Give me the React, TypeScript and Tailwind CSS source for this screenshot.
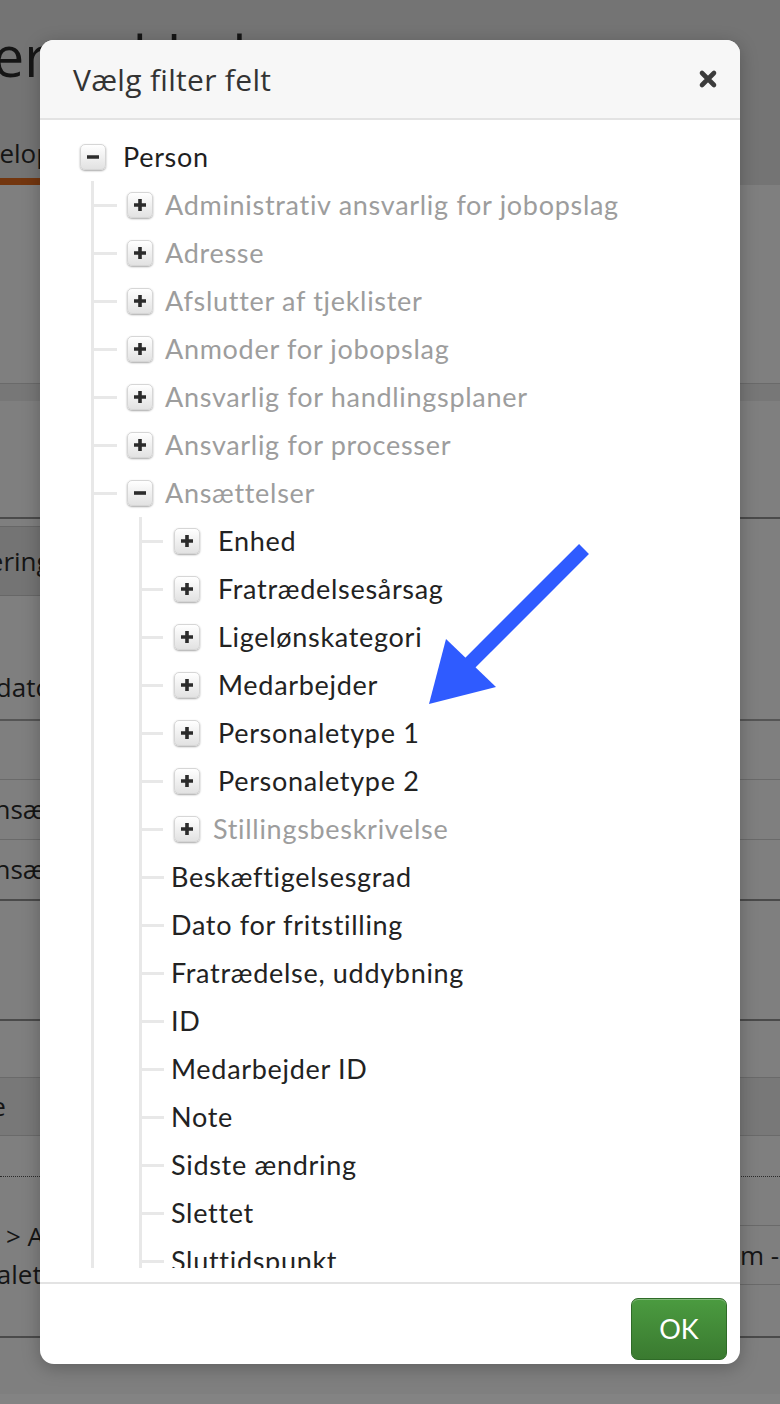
import React from 'react';

type Item = { label: string; kind: 'open' | 'closed' | 'leaf'; muted?: boolean; tight?: boolean };

const level1: Item[] = [
  { label: 'Administrativ ansvarlig for jobopslag', kind: 'closed', muted: true },
  { label: 'Adresse', kind: 'closed', muted: true },
  { label: 'Afslutter af tjeklister', kind: 'closed', muted: true },
  { label: 'Anmoder for jobopslag', kind: 'closed', muted: true },
  { label: 'Ansvarlig for handlingsplaner', kind: 'closed', muted: true },
  { label: 'Ansvarlig for processer', kind: 'closed', muted: true },
];

const employment: Item[] = [
  { label: 'Enhed', kind: 'closed' },
  { label: 'Fratrædelsesårsag', kind: 'closed' },
  { label: 'Ligelønskategori', kind: 'closed' },
  { label: 'Medarbejder', kind: 'closed' },
  { label: 'Personaletype 1', kind: 'closed' },
  { label: 'Personaletype 2', kind: 'closed' },
  { label: 'Stillingsbeskrivelse', kind: 'closed', muted: true, tight: true },
  { label: 'Beskæftigelsesgrad', kind: 'leaf' },
  { label: 'Dato for fritstilling', kind: 'leaf' },
  { label: 'Fratrædelse, uddybning', kind: 'leaf' },
  { label: 'ID', kind: 'leaf' },
  { label: 'Medarbejder ID', kind: 'leaf' },
  { label: 'Note', kind: 'leaf' },
  { label: 'Sidste ændring', kind: 'leaf' },
  { label: 'Slettet', kind: 'leaf' },
  { label: 'Sluttidspunkt', kind: 'leaf' },
  { label: 'Starttidspunkt', kind: 'leaf' },
];

const treeFont = { fontFamily: 'Lato, "Noto Sans", sans-serif' };

function ToggleBox({ open }: { open: boolean }) {
  return (
    <span className="flex h-[26px] w-[26px] shrink-0 items-center justify-center rounded-[5px] border border-[#d6d6d6] bg-linear-to-b from-white to-[#e2e2e2] shadow-[0_1px_2px_rgba(0,0,0,0.35)]">
      <svg width="14" height="14" viewBox="0 0 14 14">
        <path d={open ? 'M1 7h12' : 'M1 7h12M7 1v12'} stroke="#2b2b2b" strokeWidth="3.6" />
      </svg>
    </span>
  );
}

function Level2Row({ item }: { item: Item }) {
  const color = item.muted ? 'text-[#9d9d9d]' : 'text-[#222]';
  if (item.kind === 'leaf') {
    return (
      <li className="flex h-[48px] items-center">
        <span className="h-[3px] w-[22px] bg-[#e8e8e8]" />
        <span className={`ml-[7px] ${color}`}>{item.label}</span>
      </li>
    );
  }
  return (
    <li className="flex h-[48px] items-center">
      <span className="h-[3px] w-[21px] bg-[#e8e8e8]" />
      <span className="ml-[11px]">
        <ToggleBox open={false} />
      </span>
      <span className={`${item.tight ? 'ml-[13px]' : 'ml-[18px]'} ${color}`}>{item.label}</span>
    </li>
  );
}

function Level1Row({ item }: { item: Item }) {
  return (
    <div className="flex h-[48px] items-center">
      <span className="h-[3px] w-[23px] bg-[#e8e8e8]" />
      <span className="ml-[10px]">
        <ToggleBox open={item.kind === 'open'} />
      </span>
      <span className={`ml-[12px] ${item.muted ? 'text-[#9d9d9d]' : 'text-[#222]'}`}>{item.label}</span>
    </div>
  );
}

function BackgroundPage() {
  return (
    <div className="flex h-full flex-col text-[#151515]" style={{ fontFamily: '"Open Sans", sans-serif' }}>
      <div className="h-[185px] overflow-hidden bg-[#747474]">
        <div className="-ml-[38px] whitespace-nowrap pt-[20px] text-[56px] leading-[70px]">Termoblad</div>
        <div className="mt-[36px] flex">
          <div className="-ml-[47px] h-[59px] w-[87px] overflow-hidden whitespace-nowrap border-b-[7px] border-[#73360f] pt-[8px] text-[26px]">
            Develop
          </div>
        </div>
      </div>
      <div className="h-[198px] bg-[#7f7f7f]" />
      <div className="h-[18px] border-t border-[#6a6a6a] bg-[#777]" />
      <div className="h-[118px] border-b-2 border-[#4a4a4a] bg-[#7f7f7f]" />
      <div className="mt-[7px] flex h-[70px]">
        <div className="-ml-[62px] flex w-[112px] items-center whitespace-nowrap border border-[#676767] bg-[#747474] text-[26px]">
          Sortering
        </div>
      </div>
      <div className="flex h-[123px] items-center whitespace-nowrap pt-[60px] text-[26px]">
        <span className="-ml-[62px]">Startdato</span>
      </div>
      <div className="h-[60px] border-t-2 border-[#555]" />
      <div className="flex h-[60px] items-center whitespace-nowrap border-t border-[#6a6a6a] text-[26px]">
        <span className="-ml-[22px]">Ansættelse</span>
      </div>
      <div className="flex h-[60px] items-center whitespace-nowrap border-t border-[#6a6a6a] text-[26px]">
        <span className="-ml-[22px]">Ansættelse</span>
      </div>
      <div className="h-[120px] border-t-2 border-[#4a4a4a]" />
      <div className="h-[58px] border-t-2 border-[#4a4a4a]" />
      <div className="flex h-[59px] items-center whitespace-nowrap border-y border-[#6a6a6a] bg-[#787878] text-[26px]">
        <span className="-ml-[52px]">Type</span>
      </div>
      <div className="h-[41px] border-b border-dotted border-[#2a2a2a]" />
      <div className="flex h-[159px] justify-between">
        <div className="whitespace-nowrap pt-[40px] text-[26px] leading-[38px]">
          <div className="ml-[6px]">{'> Ansættelse'}</div>
          <div className="-ml-[88px]">Personaletype</div>
        </div>
        <div className="mt-[48px] flex h-[60px] w-[40px] items-center whitespace-nowrap border-y border-[#6a6a6a] text-[26px]">
          <span>m -</span>
        </div>
      </div>
      <div className="h-[58px] border-t-2 border-[#4a4a4a]" />
      <div className="flex-1 bg-[#838383]" />
    </div>
  );
}

export default function App() {
  return (
    <div className="relative h-[1404px] w-[780px] overflow-hidden bg-[#7f7f7f]">
      <BackgroundPage />

      <div className="absolute left-[40px] top-[40px] flex h-[1324px] w-[700px] flex-col overflow-hidden rounded-[14px] bg-white shadow-[0_4px_18px_rgba(0,0,0,0.25)]">
        <div className="flex h-[80px] shrink-0 items-center justify-between border-b-2 border-[#e3e3e3] bg-[#f7f7f7] pl-[33px] pr-[22px]">
          <h2 className="text-[30px] tracking-[0.3px] text-[#333]" style={{ fontFamily: '"Open Sans", sans-serif' }}>
            Vælg filter felt
          </h2>
          <svg width="20" height="20" viewBox="0 0 20 20">
            <path d="M4 4l12 12M16 4L4 16" stroke="#3c3c3c" strokeWidth="4.6" strokeLinecap="round" />
          </svg>
        </div>

        <div className="h-[1162px] shrink-0 pb-[14px] pt-[13px]">
          <div className="h-full overflow-hidden pl-[40px] text-[27px] tracking-[0.7px]" style={treeFont}>
            <div className="flex h-[48px] items-center">
              <ToggleBox open />
              <span className="ml-[17px] text-[#1f1f1f]">Person</span>
            </div>
            <ul className="ml-[11px] border-l-[3px] border-[#e8e8e8]">
              {level1.map((item) => (
                <li key={item.label}>
                  <Level1Row item={item} />
                </li>
              ))}
              <li>
                <Level1Row item={{ label: 'Ansættelser', kind: 'open', muted: true }} />
                <ul className="ml-[45px] border-l-[3px] border-[#e8e8e8]">
                  {employment.map((item) => (
                    <Level2Row key={item.label} item={item} />
                  ))}
                </ul>
              </li>
            </ul>
          </div>
        </div>

        <div className="flex flex-1 items-start justify-end border-t-2 border-[#e3e3e3] pr-[13px] pt-[14px]">
          <button
            className="h-[62px] w-[96px] rounded-[7px] border border-[#2f6b28] bg-linear-to-b from-[#4b9b40] to-[#3a7a30] text-[27px] text-white shadow-[inset_0_1px_0_rgba(255,255,255,0.3)]"
            style={treeFont}
          >
            OK
          </button>
        </div>
      </div>

      <svg className="pointer-events-none absolute left-0 top-0" width="780" height="1404" viewBox="0 0 780 1404">
        <path d="M584 549L468 665" stroke="#2f5bff" strokeWidth="14" />
        <polygon points="429,704 446,639 496,687" fill="#2f5bff" />
      </svg>
    </div>
  );
}
